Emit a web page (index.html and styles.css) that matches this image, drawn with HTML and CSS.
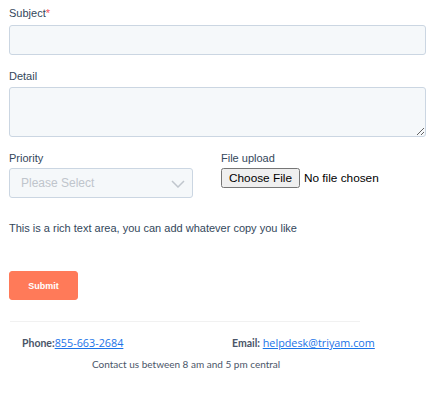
FILE: index.html
```html
<!DOCTYPE html>
<html>
<head>
<meta charset="utf-8">
<link rel="stylesheet" href="styles.css">
</head>
<body>
<form class="form">
  <div class="field">
    <label class="label">Subject<span class="req">*</span></label>
    <input class="input" type="text">
  </div>
  <div class="field">
    <label class="label label-detail">Detail</label>
    <textarea class="textarea"></textarea>
  </div>
  <div class="row">
    <div class="col">
      <label class="label label-row">Priority</label>
      <div class="select">
        <span class="placeholder">Please Select</span>
        <svg class="chev" width="14" height="8" viewBox="0 0 14 8"><path d="M1 1l6 6 6-6" fill="none" stroke="#c0c6cd" stroke-width="1.5"/></svg>
      </div>
    </div>
    <div class="col col-file">
      <label class="label label-row">File upload</label>
      <input class="file" type="file">
    </div>
  </div>
  <p class="rich">This is a rich text area, you can add whatever copy you like</p>
  <button class="submit" type="button">Submit</button>
</form>
<footer class="footer">
  <div class="contacts">
    <div class="item phone"><b>Phone:</b><a href="#">855-663-2684</a></div>
    <div class="item email"><b>Email:</b> <a href="#">helpdesk@triyam.com</a></div>
  </div>
  <p class="hours">Contact us between 8 am and 5 pm central</p>
</footer>
</body>
</html>
```
FILE: styles.css
```css
html, body { margin: 0; padding: 0; background: #fff; }
body { font-family: "Liberation Sans", Arial, sans-serif; color: #33475b; overflow-x: hidden; }
.form { padding: 6px 15px 0 9px; }
.field { display: flex; flex-direction: column; margin-bottom: 14px; }
.label { font-size: 11px; line-height: 14px; color: #33475b; margin-bottom: 5px; display: block; }
.label-detail { margin-bottom: 4px; }
.label-row { margin-bottom: 3px; }
.req { color: #f2545b; }
.input { box-sizing: border-box; height: 30px; width: 100%; background: #f5f8fa; border: 1px solid #cbd6e2; border-radius: 3px; margin: 0; }
.textarea { box-sizing: border-box; height: 50px; width: 100%; background: #f5f8fa; border: 1px solid #cbd6e2; border-radius: 3px; margin: 0; resize: vertical; }
.row { display: flex; gap: 28px; margin-top: 7px; }
.col { width: 184px; }
.col-file { width: auto; }
.select { box-sizing: border-box; height: 30px; width: 184px; background: #f5f8fa; border: 1px solid #cbd6e2; border-radius: 3px; display: flex; align-items: center; justify-content: space-between; padding: 0 7px 0 11px; }
.placeholder { font-size: 12px; color: #bfc5cc; }
.chev { margin-top: 1px; }
.file { font-family: "Liberation Sans", Arial, sans-serif; font-size: 11.8px; color: #000; margin: -3px 0 0; width: 190px; }
.rich { font-size: 11px; margin: 24px 0 0; color: #33475b; }
.submit { display: block; margin-top: 37px; width: 69px; height: 29px; background: #ff7a59; border: 1px solid #ff7a59; border-radius: 3px; color: #fff; font-family: "Liberation Sans", Arial, sans-serif; font-weight: bold; font-size: 9px; padding: 0; }
.footer { margin: 21px 0 0 10px; width: 350px; border-top: 1px solid #f1f1f1; font-family: Lato, "Liberation Sans", sans-serif; }
.contacts { display: flex; padding: 13px 0 0 12px; font-size: 10.5px; color: #4a5568; align-items: baseline; white-space: nowrap; }
.item { flex: none; }
.item b { font-weight: bold; color: #4a5568; }
.phone { width: 210px; }
.item a { color: #1a73e8; text-decoration: underline; font-family: "Open Sans", sans-serif; font-size: 10.8px; }
.hours { font-size: 10px; color: #4a5568; margin: 8px 0 0 82px; }
```
